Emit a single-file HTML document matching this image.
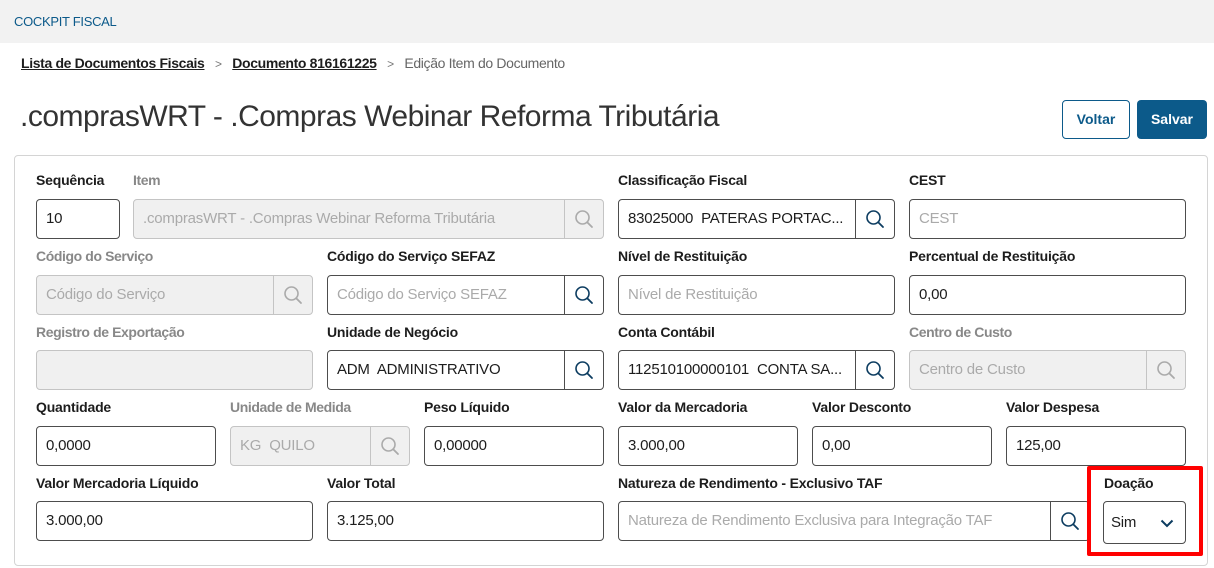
<!DOCTYPE html>
<html><head><meta charset="utf-8"><style>
*{box-sizing:border-box;margin:0;padding:0}
body{width:1214px;height:568px;background:#fff;font-family:"Liberation Sans",sans-serif;position:relative;overflow:hidden;color:#1d1d1d}
.a{position:absolute}
.hdr{left:0;top:0;width:1214px;height:43px;background:#f2f2f2}
.lbl{position:absolute;font-size:14px;font-weight:bold;color:#1d1d1d;letter-spacing:-0.2px;white-space:nowrap}
.lbl.d{color:#888;font-weight:bold;letter-spacing:-0.4px}
.in{position:absolute;height:40px;border:1px solid #4d4d4d;border-radius:4px;background:#fff;font-size:15px;color:#1d1d1d;padding-left:9px;line-height:38px;white-space:nowrap;overflow:hidden;letter-spacing:-0.2px}
.in.ph{color:#aaa}
.in.dis{background:#f0f0f0;border-color:#c4c4c4;color:#aaa}
.btn{position:absolute;top:0;right:0;width:39px;height:38px;border-left:1px solid #4d4d4d;display:flex;align-items:center;justify-content:center}
.dis .btn{border-left-color:#c4c4c4}
</style></head><body>
<div class="a hdr"></div>
<div class="a" style="left:14px;top:14px;font-size:13px;color:#0c5a8a;letter-spacing:-0.3px">COCKPIT FISCAL</div>
<div class="a" style="left:21px;top:55px;font-size:14px;white-space:nowrap;letter-spacing:-0.35px">
<span style="text-decoration:underline;font-weight:bold;color:#1d1d1d">Lista de Documentos Fiscais</span>
<span style="color:#777;font-size:12px;margin:0 7px">&gt;</span>
<span style="text-decoration:underline;font-weight:bold">Documento 816161225</span>
<span style="color:#777;font-size:12px;margin:0 7px">&gt;</span>
<span style="color:#666">Edição Item do Documento</span></div>
<div class="a" style="left:20px;top:100px;font-size:30px;color:#333;letter-spacing:-0.5px;white-space:nowrap">.comprasWRT - .Compras Webinar Reforma Tributária</div>
<div class="a" style="left:1062px;top:100px;width:68px;height:39px;border:1px solid #0c5a8a;border-radius:4px;color:#0c5a8a;font-weight:bold;font-size:14px;text-align:center;line-height:37px">Voltar</div>
<div class="a" style="left:1137px;top:100px;width:70px;height:39px;background:#0c5a8a;border-radius:4px;color:#fff;font-weight:bold;font-size:14px;text-align:center;line-height:39px">Salvar</div>
<div class="a" style="left:14px;top:155px;width:1194px;height:411px;border:1px solid #d4d4d4;border-radius:4px"></div>

<svg width="0" height="0" style="position:absolute"><defs>
<symbol id="s" viewBox="0 0 20 20"><circle cx="8.5" cy="8.5" r="6.5" fill="none" stroke="currentColor" stroke-width="1.6"/><line x1="13.2" y1="13.2" x2="18" y2="18" stroke="currentColor" stroke-width="1.8" stroke-linecap="round"/></symbol></defs></svg>

<!-- row 1 -->
<div class="lbl" style="left:36px;top:172px">Sequência</div>
<div class="lbl d" style="left:133px;top:172px">Item</div>
<div class="lbl" style="left:618px;top:172px">Classificação Fiscal</div>
<div class="lbl" style="left:909px;top:172px">CEST</div>
<div class="in" style="left:36px;top:199px;width:84px">10</div>
<div class="in dis" style="left:133px;top:199px;width:471px">.comprasWRT - .Compras Webinar Reforma Tributária<div class="btn"><svg width="20" height="20" style="color:#aaa"><use href="#s"/></svg></div></div>
<div class="in" style="left:618px;top:199px;width:277px">83025000&nbsp; PATERAS PORTAC...<div class="btn"><svg width="20" height="20" style="color:#0c3c60"><use href="#s"/></svg></div></div>
<div class="in ph" style="left:909px;top:199px;width:277px">CEST</div>

<!-- row 2 -->
<div class="lbl d" style="left:36px;top:248px">Código do Serviço</div>
<div class="lbl" style="left:327px;top:248px">Código do Serviço SEFAZ</div>
<div class="lbl" style="left:618px;top:248px">Nível de Restituição</div>
<div class="lbl" style="left:909px;top:248px">Percentual de Restituição</div>
<div class="in dis" style="left:36px;top:275px;width:277px">Código do Serviço<div class="btn"><svg width="20" height="20" style="color:#aaa"><use href="#s"/></svg></div></div>
<div class="in ph" style="left:327px;top:275px;width:277px">Código do Serviço SEFAZ<div class="btn"><svg width="20" height="20" style="color:#0c3c60"><use href="#s"/></svg></div></div>
<div class="in ph" style="left:618px;top:275px;width:277px">Nível de Restituição</div>
<div class="in" style="left:909px;top:275px;width:277px">0,00</div>

<!-- row 3 -->
<div class="lbl d" style="left:36px;top:324px">Registro de Exportação</div>
<div class="lbl" style="left:327px;top:324px">Unidade de Negócio</div>
<div class="lbl" style="left:618px;top:324px">Conta Contábil</div>
<div class="lbl d" style="left:909px;top:324px">Centro de Custo</div>
<div class="in dis" style="left:36px;top:350px;width:277px"></div>
<div class="in" style="left:327px;top:350px;width:277px">ADM&nbsp; ADMINISTRATIVO<div class="btn"><svg width="20" height="20" style="color:#0c3c60"><use href="#s"/></svg></div></div>
<div class="in" style="left:618px;top:350px;width:277px">112510100000101&nbsp; CONTA SA...<div class="btn"><svg width="20" height="20" style="color:#0c3c60"><use href="#s"/></svg></div></div>
<div class="in dis" style="left:909px;top:350px;width:277px">Centro de Custo<div class="btn"><svg width="20" height="20" style="color:#aaa"><use href="#s"/></svg></div></div>

<!-- row 4 -->
<div class="lbl" style="left:36px;top:399px">Quantidade</div>
<div class="lbl d" style="left:230px;top:399px">Unidade de Medida</div>
<div class="lbl" style="left:424px;top:399px">Peso Líquido</div>
<div class="lbl" style="left:618px;top:399px">Valor da Mercadoria</div>
<div class="lbl" style="left:812px;top:399px">Valor Desconto</div>
<div class="lbl" style="left:1006px;top:399px">Valor Despesa</div>
<div class="in" style="left:36px;top:426px;width:180px">0,0000</div>
<div class="in dis" style="left:230px;top:426px;width:180px">KG&nbsp; QUILO<div class="btn"><svg width="20" height="20" style="color:#aaa"><use href="#s"/></svg></div></div>
<div class="in" style="left:424px;top:426px;width:180px">0,00000</div>
<div class="in" style="left:618px;top:426px;width:180px">3.000,00</div>
<div class="in" style="left:812px;top:426px;width:180px">0,00</div>
<div class="in" style="left:1006px;top:426px;width:180px">125,00</div>

<!-- row 5 -->
<div class="lbl" style="left:36px;top:475px">Valor Mercadoria Líquido</div>
<div class="lbl" style="left:327px;top:475px">Valor Total</div>
<div class="lbl" style="left:618px;top:475px">Natureza de Rendimento - Exclusivo TAF</div>
<div class="lbl" style="left:1104px;top:475px">Doação</div>
<div class="in" style="left:36px;top:501px;width:277px">3.000,00</div>
<div class="in" style="left:327px;top:501px;width:277px">3.125,00</div>
<div class="in ph" style="left:618px;top:501px;width:472px">Natureza de Rendimento Exclusiva para Integração TAF<div class="btn"><svg width="20" height="20" style="color:#0c3c60"><use href="#s"/></svg></div></div>
<div class="in" style="left:1103px;top:501px;width:83px;height:43px;line-height:41px;padding-left:7px">Sim
<svg width="14" height="9" style="position:absolute;left:56px;top:17px"><polyline points="1.5,1.5 7,7 12.5,1.5" fill="none" stroke="#0c3c60" stroke-width="2"/></svg></div>
<div class="a" style="left:1087px;top:466px;width:116px;height:90px;border:4px solid #f00;border-radius:2px"></div>
</body></html>
